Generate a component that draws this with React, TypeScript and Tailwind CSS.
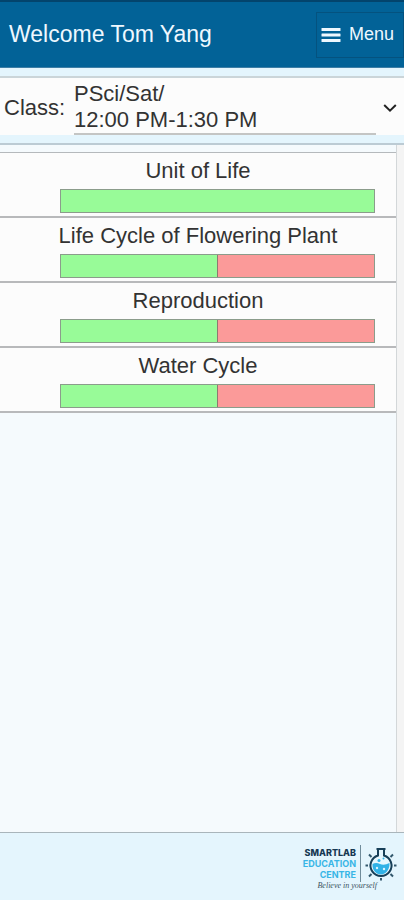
import { useState } from 'react';

type Unit = {
  name: string;
  done: number;
  total: number;
};

const classes = [{ id: 'psci-sat', name: 'PSci/Sat/', time: '12:00 PM-1:30 PM' }];

const units: Unit[] = [
  { name: 'Unit of Life', done: 2, total: 2 },
  { name: 'Life Cycle of Flowering Plant', done: 1, total: 2 },
  { name: 'Reproduction', done: 1, total: 2 },
  { name: 'Water Cycle', done: 1, total: 2 },
];

const Header = () => (
  <header className="flex items-center justify-between border-t-2 border-[#03446d] bg-[#026297] pl-[9px] h-[68px] border-b border-b-[#3d7ea6]">
    <h1 className="text-[23px] text-[#eef8ff]">Welcome Tom Yang</h1>
    <button className="flex h-[46px] items-center gap-2 border border-[#04527f] pl-1 pr-[9px] text-[18px] text-[#eef8ff]">
      <svg width="20" height="16" viewBox="0 0 20 16" fill="currentColor" aria-hidden="true">
        <rect x="0.5" y="1" width="19" height="3" rx="0.5" />
        <rect x="0.5" y="6.5" width="19" height="3" rx="0.5" />
        <rect x="0.5" y="12" width="19" height="3" rx="0.5" />
      </svg>
      Menu
    </button>
  </header>
);

const ClassPicker = () => {
  const [classId, setClassId] = useState(classes[0].id);
  const selected = classes.find((c) => c.id === classId) ?? classes[0];

  return (
    <div className="mt-2 flex items-center border-t-2 border-[#cbd5d9] bg-[#fcfcfc] pt-[3px] pl-1 text-[22px] leading-[26px] text-[#333333]">
      <label htmlFor="class" className="w-[70px] shrink-0">
        Class:
      </label>
      {/* The select lies over the label, since its own text cannot wrap */}
      <div className="relative flex flex-1 items-center">
        <div className="flex-1 border-b-2 border-[#c4c5c4]" aria-hidden="true">
          <div>{selected.name}</div>
          <div>{selected.time}</div>
        </div>
        <svg className="mr-[7px] ml-[7px]" width="14" height="10" viewBox="0 0 14 10" fill="none" stroke="#222222" strokeWidth="2" aria-hidden="true">
          <path d="M1.2 2 L7 7.6 L12.8 2" />
        </svg>
        <select
          id="class"
          value={classId}
          onChange={(e) => setClassId(e.target.value)}
          className="absolute inset-0 w-full cursor-pointer opacity-0"
        >
          {classes.map((c) => (
            <option key={c.id} value={c.id}>
              {c.name} {c.time}
            </option>
          ))}
        </select>
      </div>
    </div>
  );
};

const UnitRow = ({ unit }: { unit: Unit }) => (
  <li className="border-b-2 border-[#b8b9bb] bg-[#fcfcfc] pb-[3px]">
    <h2 className="text-center text-[22px] leading-9 text-[#333333]">{unit.name}</h2>
    <div className="mr-[21px] ml-[60px] flex h-6 border border-[#8b9c8b] bg-[#fb9a99]">
      <div
        className={unit.done < unit.total ? 'border-r border-[#8c7a70] bg-[#98fb98]' : 'bg-[#98fb98]'}
        style={{ width: `${(unit.done / unit.total) * 100}%` }}
      />
    </div>
  </li>
);

const Logo = () => (
  <div className="flex flex-col items-end pr-[7px]">
    <div className="flex items-center">
      <div className="border-r border-[#708c9b] py-[2px] pr-1 text-right font-['Inter',sans-serif] text-[9px] leading-[11px] font-extrabold">
        <div className="text-[#173852]">SMARTLAB</div>
        <div className="font-bold text-[#38b5e6]">EDUCATION</div>
        <div className="font-bold text-[#38b5e6]">CENTRE</div>
      </div>
      <svg className="ml-1" width="32" height="34" viewBox="0 0 32 34" fill="none" aria-hidden="true">
        <circle cx="16" cy="18.5" r="10.5" fill="#e6f7fe" />
        <path d="M7.5 17 Q11 15 15 17 T24.5 16 C25 22 21 27.5 16 27.5 C11 27.5 7 23 7.5 17Z" fill="#31b2e7" />
        <path d="M13 2 V8.5 A10.5 10.5 0 1 0 19 8.5 V2" stroke="#173f58" strokeWidth="2" />
        <path d="M11.5 2 H20.5" stroke="#173f58" strokeWidth="2" />
        <circle cx="14" cy="13.5" r="1.5" fill="#31b2e7" />
        <circle cx="18.5" cy="11.5" r="1" fill="#31b2e7" />
        <circle cx="12" cy="21" r="1.2" fill="#d9f4ff" />
        <circle cx="19" cy="22" r="1.2" fill="#d9f4ff" />
        <path
          d="M0.5 18.5 H3 M29 18.5 H31.5 M4 7.5 L6.5 10 M28 7.5 L25.5 10 M4 29.5 L6.5 27 M28 29.5 L25.5 27 M16 31 V33.5"
          stroke="#31576c"
          strokeWidth="2"
        />
      </svg>
    </div>
    <div className="pr-5 font-['Liberation_Serif',serif] text-[8px] leading-[8px] text-[#3b5361] italic">
      Believe in yourself
    </div>
  </div>
);

export default function App() {
  return (
    <div className="flex min-h-screen flex-col bg-[#e4f5fd] font-['Liberation_Sans',sans-serif]">
      <Header />
      <ClassPicker />
      <main className="mt-2 flex flex-1 border-t-2 border-[#bccbd4] bg-[#f5fafd]">
        <div className="flex-1 border-r border-[#d3d7d9] pt-[7px]">
          <ul className="border-t border-[#b5b9bc]">
            {units.map((unit) => (
              <UnitRow key={unit.name} unit={unit} />
            ))}
          </ul>
        </div>
        <div className="w-[7px] bg-[#f4f4f4]" />
      </main>
      <footer className="flex h-[68px] justify-end border-t border-[#a9b5bb] pt-3">
        <Logo />
      </footer>
    </div>
  );
}
